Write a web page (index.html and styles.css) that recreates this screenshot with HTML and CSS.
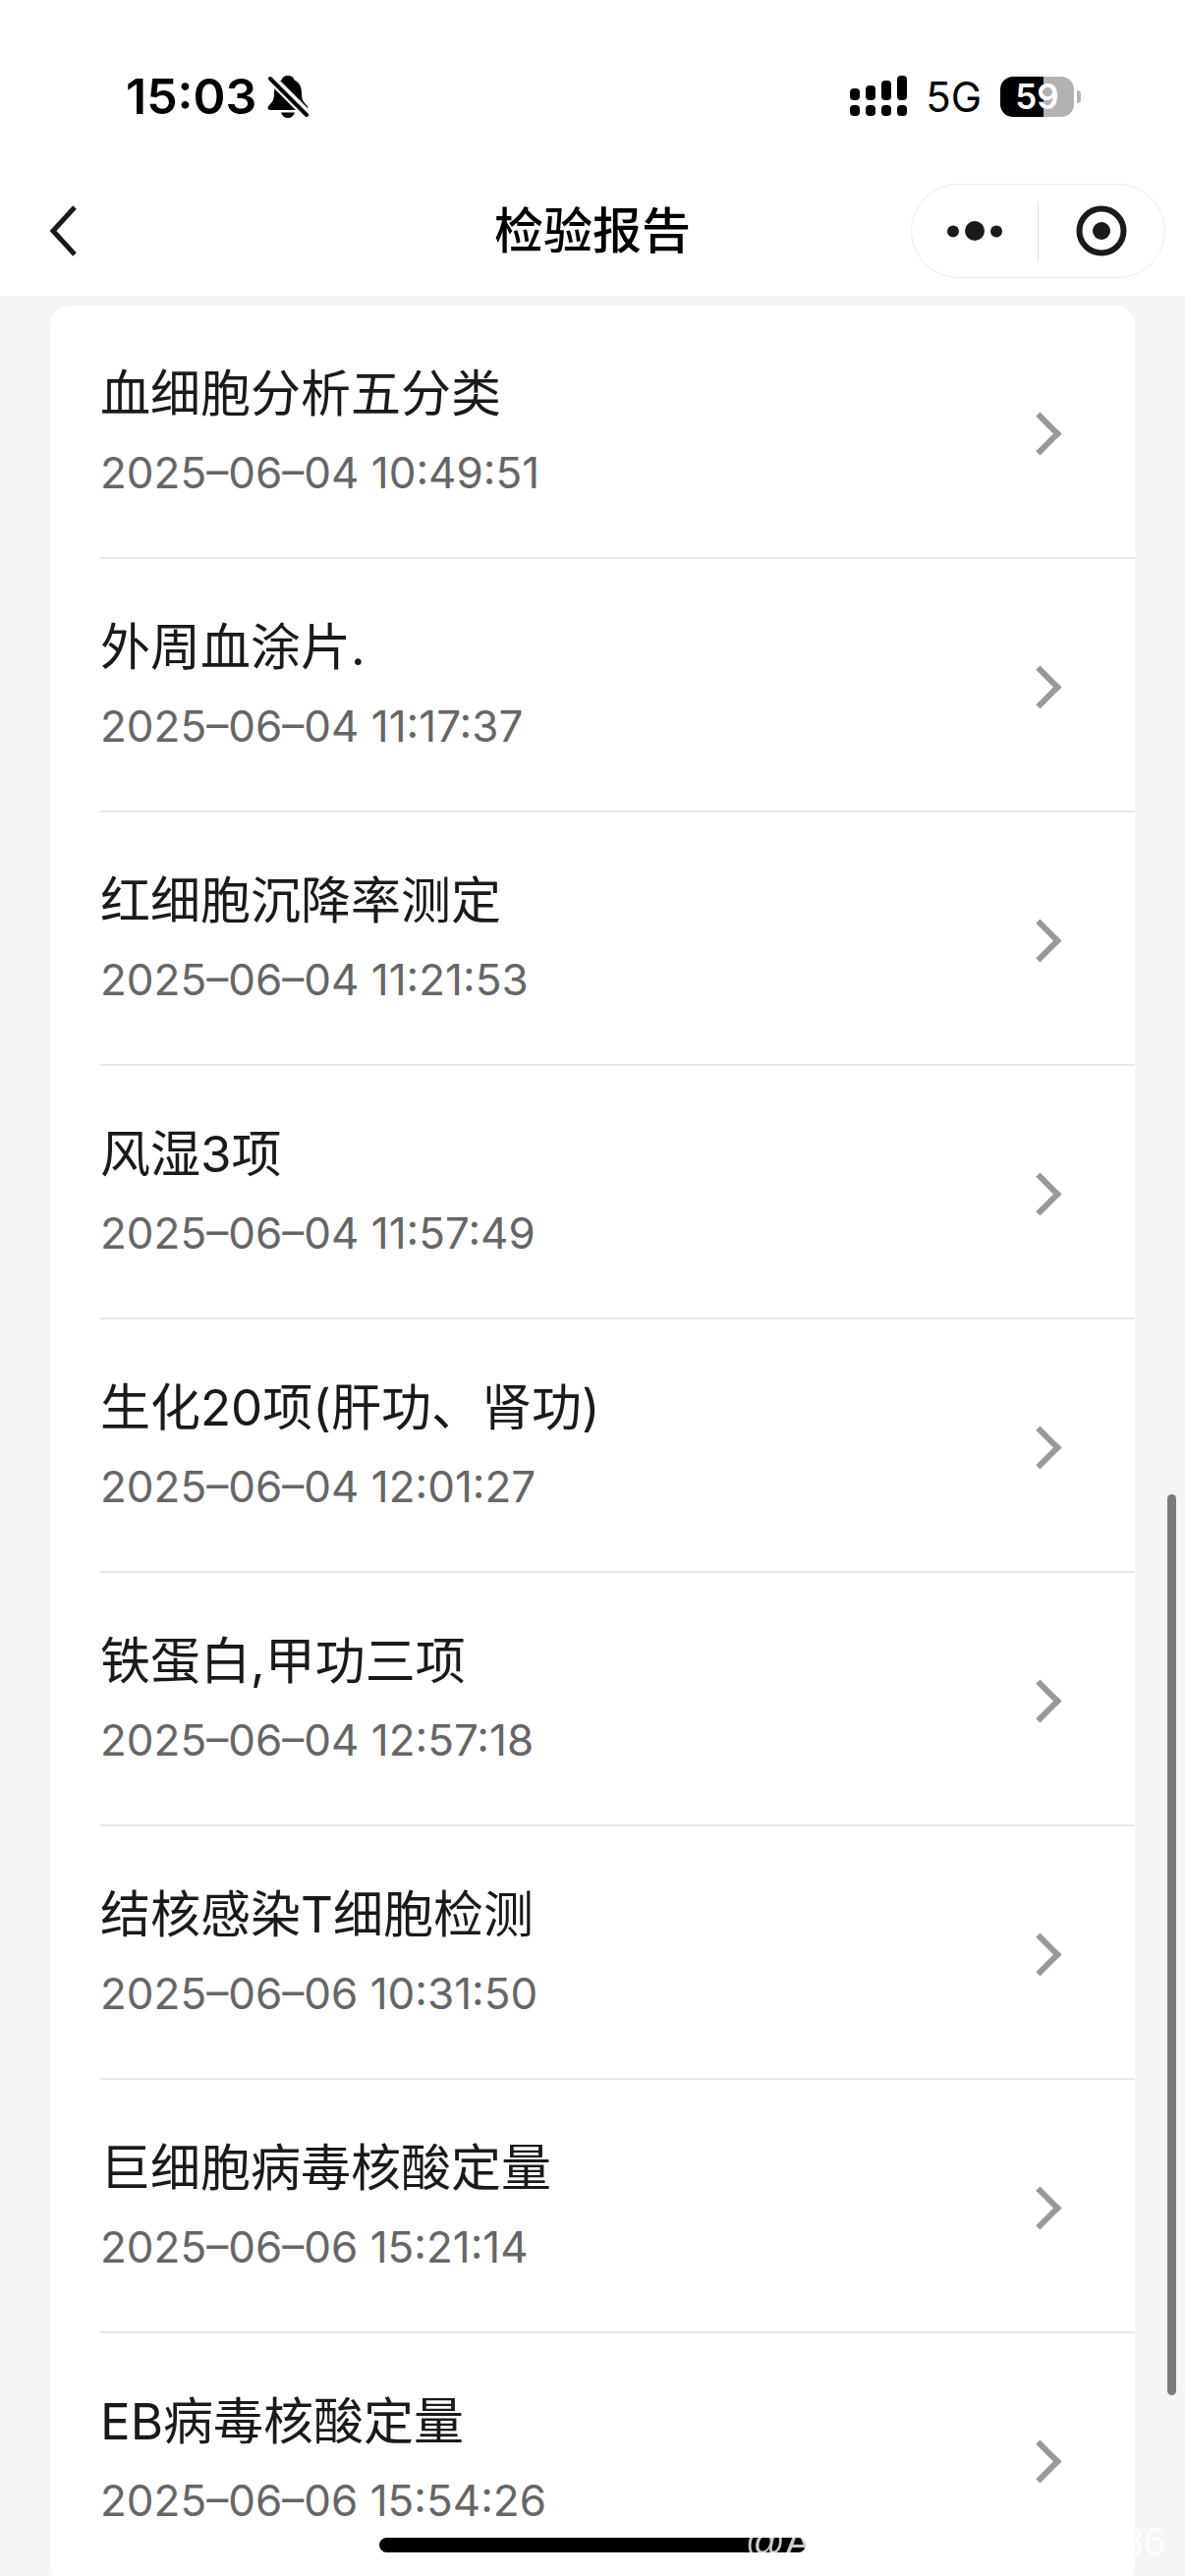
FILE: index.html
```html
<!DOCTYPE html>
<html lang="zh-CN">
<head>
  <meta charset="UTF-8" />
  <meta name="viewport" content="width=device-width, initial-scale=1.0" />
  <title>检验报告</title>
  <link rel="stylesheet" href="styles.css">
</head>
<body>
  <div class="status-bar">
    <div class="status-left">
      <span class="clock">15:03</span>
      <svg class="bell" viewBox="0 0 42 46" aria-hidden="true">
        <path d="M21 2c-3.500 0-6 2-6.500 4.500C9 9 7 14 7 20c0 7-2 9-5 12-2.500 3-1.500 5 1.500 5h35c3 0 4-2 1.500-5-3-3-5-5-5-12 0-6-2-11-7.500-13.500C27 4 24.500 2 21 2z"/>
        <path d="M14 39.500h14c-1 3.500-3.500 5.500-7 5.500s-6-2-7-5.500z"/>
        <path class="bell-gap" d="M3 4l38 38"/>
        <path class="bell-slash" d="M3 5l37 37"/>
      </svg>
    </div>
    <div class="status-right">
      <svg class="signal" viewBox="0 0 58 42" aria-hidden="true">
        <rect x="0" y="13" width="10" height="12" rx="4"/>
        <rect x="16" y="10" width="10" height="15" rx="4"/>
        <rect x="32" y="5" width="10" height="20" rx="4"/>
        <rect x="48" y="0" width="10" height="25" rx="4"/>
        <rect x="0" y="30" width="10" height="11" rx="4"/>
        <rect x="16" y="30" width="10" height="11" rx="4"/>
        <rect x="32" y="30" width="10" height="11" rx="4"/>
        <rect x="48" y="30" width="10" height="11" rx="4"/>
      </svg>
      <span class="network">5G</span>
      <span class="battery">59</span>
    </div>
  </div>

  <header class="nav">
    <button class="back" type="button" aria-label="返回">
      <svg viewBox="0 0 30 54" aria-hidden="true"><path d="M26 3L4 27l22 24"/></svg>
    </button>
    <h1>检验报告</h1>
    <div class="capsule">
      <button type="button" aria-label="更多">
        <svg class="more" viewBox="0 0 56 20" aria-hidden="true">
          <circle cx="6" cy="10.500" r="6"/>
          <circle cx="28" cy="10" r="10"/>
          <circle cx="50" cy="10.500" r="6"/>
        </svg>
      </button>
      <button type="button" aria-label="关闭">
        <svg class="close" viewBox="0 0 52 52" aria-hidden="true">
          <circle class="ring" cx="26" cy="26" r="22.500"/>
          <circle cx="26" cy="26" r="9"/>
        </svg>
      </button>
    </div>
  </header>

  <main>
    <ul class="report-list">
      <li><a href="#"><span class="name">血细胞分析五分类</span><time>2025–06–04 10:49:51</time></a></li>
      <li><a href="#"><span class="name">外周血涂片.</span><time>2025–06–04 11:17:37</time></a></li>
      <li><a href="#"><span class="name">红细胞沉降率测定</span><time>2025–06–04 11:21:53</time></a></li>
      <li><a href="#"><span class="name">风湿3项</span><time>2025–06–04 11:57:49</time></a></li>
      <li><a href="#"><span class="name">生化20项(肝功、肾功)</span><time>2025–06–04 12:01:27</time></a></li>
      <li><a href="#"><span class="name">铁蛋白,甲功三项</span><time>2025–06–04 12:57:18</time></a></li>
      <li><a href="#"><span class="name">结核感染T细胞检测</span><time>2025–06–06 10:31:50</time></a></li>
      <li><a href="#"><span class="name">巨细胞病毒核酸定量</span><time>2025–06–06 15:21:14</time></a></li>
      <li><a href="#"><span class="name">EB病毒核酸定量</span><time>2025–06–06 15:54:26</time></a></li>
    </ul>
  </main>

  <div class="scroll-thumb"></div>
  <div class="home-indicator"></div>
  <div class="watermark">@Ash4828 in house086</div>
</body>
</html>
```

FILE: styles.css
```css
*, *::after {
  box-sizing: border-box;
}
body {
  font-family: Inter, "Noto Sans CJK SC", sans-serif;
  margin: 0;
  height: 100vh;
  display: flex;
  flex-direction: column;
  overflow: hidden;
  background: #f5f5f5;
  color: #1a1a1a;
}
button {
  display: flex;
  align-items: center;
  justify-content: center;
  padding: 0;
  border: none;
  background: none;
  cursor: pointer;
}

/* status bar */
.status-bar {
  display: flex;
  justify-content: space-between;
  align-items: center;
  height: 168px;
  padding: 28px 113px 0 128px;
  background: #fff;
  color: #000;
}
.status-left, .status-right {
  display: flex;
  align-items: center;
}
.status-left {
  gap: 11px;
}
.status-right {
  gap: 19px;
}
.clock {
  font-size: 50px;
  font-weight: 600;
}
.bell {
  width: 42px;
  height: 46px;
}
.bell-gap {
  stroke: #fff;
  stroke-width: 10;
}
.bell-slash {
  stroke: #000;
  stroke-width: 4;
  stroke-linecap: round;
}
.signal {
  width: 58px;
  height: 42px;
}
.network {
  font-size: 42px;
}
.battery {
  position: relative;
  width: 75px;
  height: 41px;
  border-radius: 13px;
  background: linear-gradient(to right, #000 59%, #b2b2b2 59%);
  color: #fff;
  font-size: 35px;
  font-weight: 600;
  line-height: 41px;
  text-align: center;
}
.battery::after {
  content: "";
  position: absolute;
  right: -7px;
  top: 14px;
  width: 4px;
  height: 13px;
  border-radius: 0 6px 6px 0;
  background: #b2b2b2;
}

/* title bar */
.nav {
  display: grid;
  grid-template-columns: 1fr auto 1fr;
  align-items: center;
  height: 133px;
  padding: 0 20px;
  background: #fff;
}
.back {
  width: 90px;
  height: 90px;
}
.back svg {
  width: 30px;
  height: 54px;
  fill: none;
  stroke: #1a1a1a;
  stroke-width: 5;
}
.nav h1 {
  margin: 0;
  color: #000;
  font-size: 50px;
  font-weight: 500;
  line-height: 72px;
}
.capsule {
  justify-self: end;
  display: flex;
  align-items: center;
  width: 259px;
  height: 96px;
  border: 1px solid #ebebeb;
  border-radius: 48px;
}
.capsule button {
  flex: 1;
  height: 60px;
}
.capsule button + button {
  border-left: 1px solid #dedede;
}
.capsule svg {
  fill: #1a1a1a;
}
.more {
  width: 56px;
  height: 20px;
}
.close {
  width: 52px;
  height: 52px;
}
.close .ring {
  fill: none;
  stroke: #1a1a1a;
  stroke-width: 6;
}

/* report list */
main {
  flex: 1;
  min-height: 0;
  padding: 10px 51px;
}
.report-list {
  list-style: none;
  margin: 0;
  padding: 0 0 0 51px;
  border-radius: 20px;
  background: #fff;
}
.report-list li + li {
  border-top: 2px solid #e8e8e8;
}
.report-list a {
  display: grid;
  grid-template-columns: 1fr 44px;
  row-gap: 8px;
  height: 256px;
  align-content: center;
  padding: 4px 68px 0 0;
  color: inherit;
  text-decoration: none;
}
.report-list a::after {
  content: "";
  grid-column: 2;
  grid-row: 1 / 3;
  place-self: center start;
  width: 31px;
  height: 31px;
  border: solid #999;
  border-width: 6px 6px 0 0;
  transform: rotate(45deg);
}
.name {
  font-size: 51px;
  line-height: 72px;
}
time {
  color: #666;
  font-size: 44px;
  line-height: 72px;
}

/* overlays */
.scroll-thumb {
  position: fixed;
  top: 58%;
  right: 9px;
  width: 9px;
  height: 35%;
  border-radius: 5px;
  background: #7b7b7b;
}
.home-indicator {
  position: fixed;
  bottom: 24px;
  left: 32%;
  right: 32%;
  height: 15px;
  border-radius: 8px;
  background: #000;
}
.watermark {
  position: fixed;
  right: 20px;
  bottom: 12px;
  color: rgba(255, 255, 255, 0.8);
  font-family: "Liberation Sans", sans-serif;
  font-size: 40px;
}
```
